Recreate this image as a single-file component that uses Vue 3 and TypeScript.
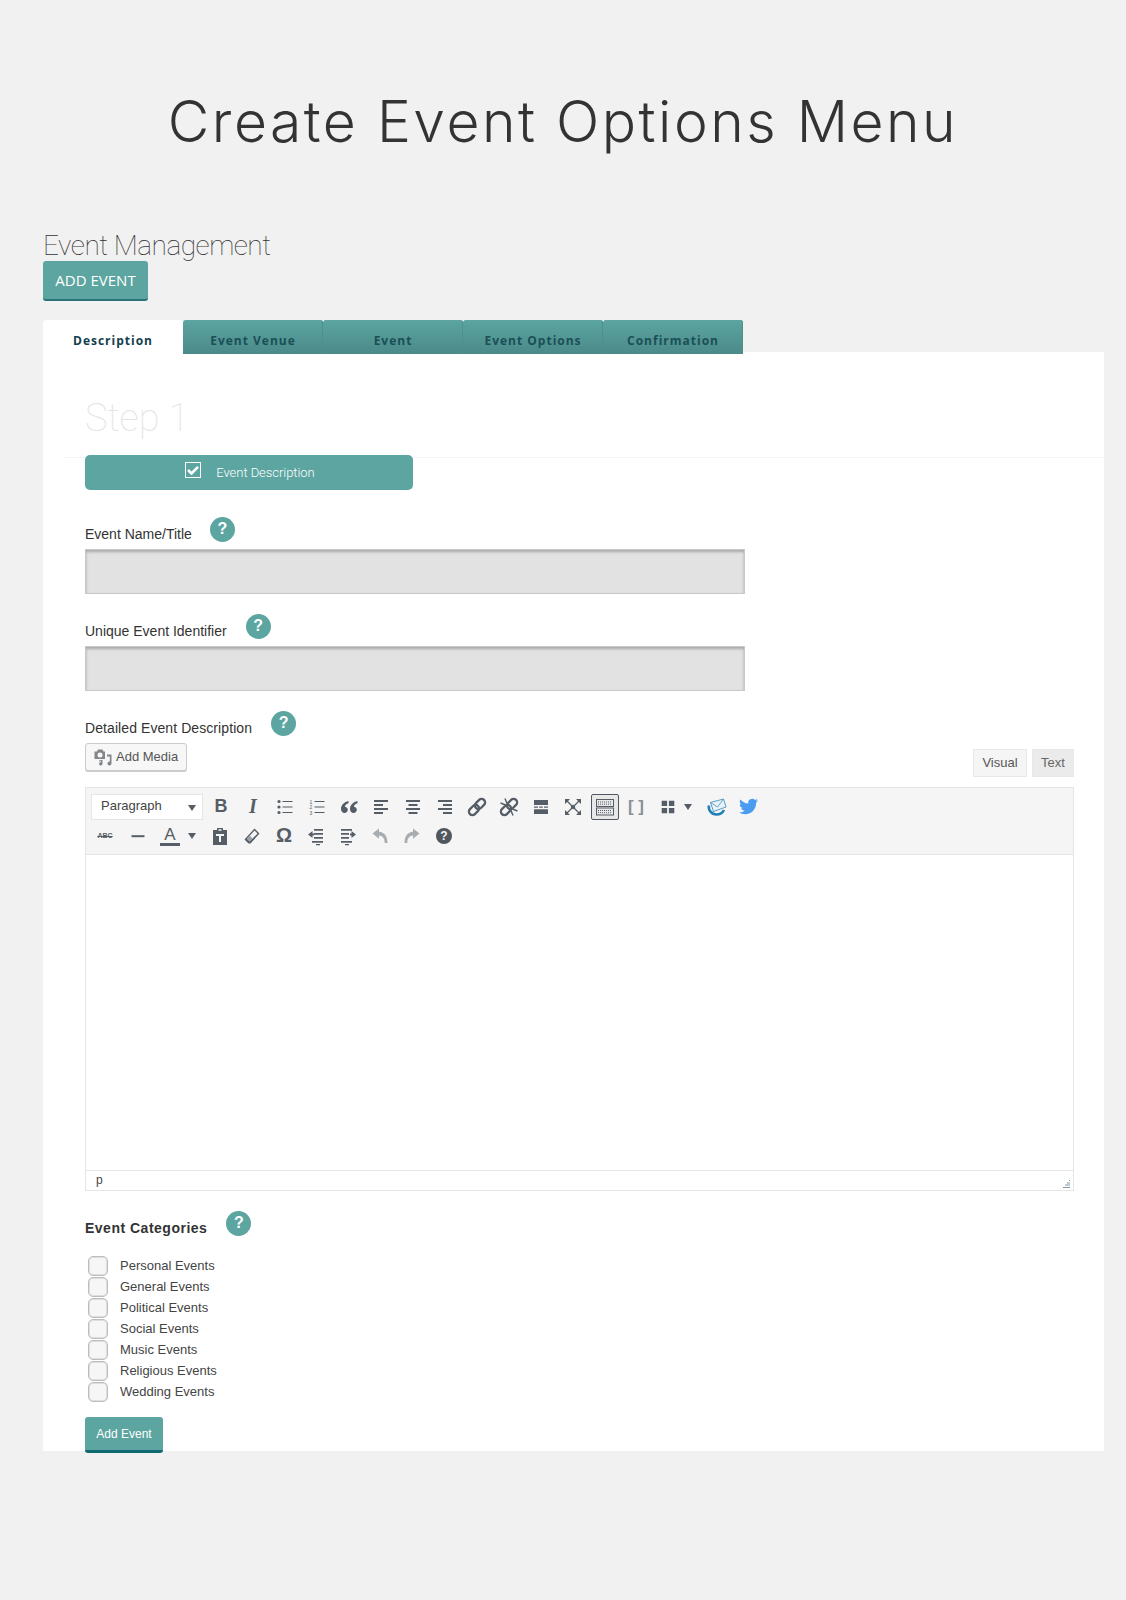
<template>
  <div class="page">
    <h1 class="page-title">Create Event Options Menu</h1>

    <div class="wrap">
      <h2 class="section-title">Event Management</h2>
      <button class="add-top">ADD EVENT</button>

      <div class="tabs">
        <div v-for="(tab, i) in tabs" :key="tab" class="tab" :class="{ active: i === 0 }">{{ tab }}</div>
      </div>

      <div class="panel">
        <h3 class="step">Step 1</h3>

        <div class="step-bar">
          <span class="step-check">
            <svg width="12" height="10" viewBox="0 0 12 10"><path d="M1 5l3.500 3.500L11 1.800" fill="none" stroke="#fff" stroke-width="2.600" /></svg>
          </span>
          <span>Event Description</span>
        </div>

        <div class="label-row first">
          <label>Event Name/Title</label>
          <span class="help">?</span>
        </div>
        <div class="fake-input"></div>

        <div class="label-row">
          <label>Unique Event Identifier</label>
          <span class="help">?</span>
        </div>
        <div class="fake-input"></div>

        <div class="label-row">
          <label class="detailed">Detailed Event Description</label>
          <span class="help">?</span>
        </div>

        <div class="media-row">
          <button class="add-media">
            <svg width="20" height="20" viewBox="0 0 20 20" fill="#82878c">
              <path fill-rule="evenodd" d="M1.500 4.500h2.500l1-2h4.500l1 2h1.500v7.500H1.500zM7 5.500a2.500 2.500 0 100 5 2.500 2.500 0 000-5z" />
              <path d="M14 7.500h4.500v9a2 2 0 11-1.700-2V9.500H14zM6 13.500l3.500-.7v4a1.700 1.700 0 11-1.500-1.700v-1l-2 .4z" />
            </svg>
            <span class="media-label">Add Media</span>
          </button>
          <div class="mode-tabs">
            <span class="mode visual">Visual</span>
            <span class="mode text">Text</span>
          </div>
        </div>

        <div class="editor">
          <div class="toolbar">
            <div class="tb-row">
              <div class="format-select">Paragraph<i class="caret"></i></div>
              <span class="tb glyph bold">B</span>
              <span class="tb glyph italic">I</span>
              <span class="tb">
                <svg viewBox="0 0 20 20"><path d="M7.500 4h10v1h-10zM7.500 9.500h10v1h-10zM7.500 15h10v1h-10z" /><circle cx="4" cy="4.500" r="1.600" /><circle cx="4" cy="10" r="1.600" /><circle cx="4" cy="15.500" r="1.600" /></svg>
              </span>
              <span class="tb">
                <svg viewBox="0 0 20 20"><path d="M7.500 4h10v1h-10zM7.500 9.500h10v1h-10zM7.500 15h10v1h-10z" /><text x="2.500" y="6.500" class="mini">1</text><text x="2.500" y="12" class="mini">2</text><text x="2.500" y="17.500" class="mini">3</text></svg>
              </span>
              <span class="tb">
                <svg viewBox="0 0 20 20"><path d="M9.500 4C5 5 2 8 2 12c0 2.300 1.400 4 3.500 4 1.900 0 3.300-1.400 3.300-3.200 0-1.800-1.300-3.100-3-3.100.4-1.700 1.900-3 3.700-3.400zM18.500 4c-4.500 1-7.500 4-7.500 8 0 2.300 1.400 4 3.500 4 1.900 0 3.300-1.400 3.300-3.200 0-1.800-1.300-3.100-3-3.100.4-1.700 1.900-3 3.700-3.400z" /></svg>
              </span>
              <span class="tb">
                <svg viewBox="0 0 20 20"><path d="M3 3h14v2H3zM3 7h9v2H3zM3 11h14v2H3zM3 15h9v2H3z" /></svg>
              </span>
              <span class="tb">
                <svg viewBox="0 0 20 20"><path d="M3 3h14v2H3zM5.500 7h9v2h-9zM3 11h14v2H3zM5.500 15h9v2h-9z" /></svg>
              </span>
              <span class="tb">
                <svg viewBox="0 0 20 20"><path d="M3 3h14v2H3zM8 7h9v2H8zM3 11h14v2H3zM8 15h9v2H8z" /></svg>
              </span>
              <span class="tb">
                <svg viewBox="0 0 20 20"><g transform="rotate(-45 10 10)" fill="none" stroke="#555d66" stroke-width="2.300"><rect x="0" y="6.500" width="11.500" height="7" rx="3.500" /><rect x="8.500" y="6.500" width="11.500" height="7" rx="3.500" /></g></svg>
              </span>
              <span class="tb">
                <svg viewBox="0 0 20 20">
                  <g transform="rotate(-45 10 10)" fill="none" stroke="#555d66" stroke-width="2.300"><rect x="0" y="6.500" width="11.500" height="7" rx="3.500" /><rect x="8.500" y="6.500" width="11.500" height="7" rx="3.500" /></g>
                  <path d="M1.500 6l5 2M6 1.500l2 5M18.500 14l-5-2M14 18.500l-2-5" stroke="#555d66" stroke-width="1.400" />
                </svg>
              </span>
              <span class="tb">
                <svg viewBox="0 0 20 20"><path d="M3 3h14v5H3zM3 9.500h4v1.200H3zM8.200 9.500h3.600v1.200H8.200zM13 9.500h4v1.200h-4zM3 12.200h14V17H3z" /></svg>
              </span>
              <span class="tb">
                <svg viewBox="0 0 20 20">
                  <path d="M3 3l14 14M17 3L3 17" stroke="#555d66" stroke-width="1.300" />
                  <path d="M2 2h5L2 7zM18 2h-5l5 5zM2 18h5l-5-5zM18 18h-5l5-5zM10 7.500l2.500 2.500-2.500 2.500L7.500 10z" />
                </svg>
              </span>
              <span class="tb sink">
                <svg viewBox="0 0 20 20" fill="none" stroke="#555d66">
                  <rect x="1.500" y="2.500" width="17" height="7" />
                  <rect x="1.500" y="11" width="17" height="7" />
                  <path d="M3 5h14M3 7.200h14M3 13.500h14M3 15.700h14" stroke-dasharray="1 1" />
                </svg>
              </span>
              <span class="tb glyph shortcode">[ ]</span>
              <span class="tb grid">
                <svg viewBox="0 0 20 20"><path d="M3 3h6v6H3zM11 3h6v6h-6zM3 11h6v6H3zM11 11h6v6h-6z" /></svg>
                <i class="caret"></i>
              </span>
              <span class="tb plugin">
                <svg viewBox="0 0 20 20">
                  <path d="M2 8.500c-1 4.500 2.500 9 7.500 9 3 0 6-1.500 7.500-4.500" fill="none" stroke="#1f7fb8" stroke-width="2.600" />
                  <path d="M3.500 5.500L16.500 2l2.500 8-12.500 4.500z" fill="#e8f2f8" stroke="#4b93c2" stroke-width="0.900" />
                  <path d="M3.500 5.500l7 4.500 6-8" fill="none" stroke="#4b93c2" stroke-width="0.800" />
                </svg>
              </span>
              <span class="tb twitter">
                <svg viewBox="0 0 24 24"><path d="M23.953 4.570a10 10 0 01-2.825.775 4.958 4.958 0 002.163-2.723c-.951.555-2.005.959-3.127 1.184a4.920 4.920 0 00-8.384 4.482C7.690 8.095 4.067 6.130 1.640 3.162a4.822 4.822 0 00-.666 2.475c0 1.710.870 3.213 2.188 4.096a4.904 4.904 0 01-2.228-.616v.060a4.923 4.923 0 003.946 4.827 4.996 4.996 0 01-2.212.085 4.936 4.936 0 004.604 3.417 9.867 9.867 0 01-6.102 2.105c-.390 0-.779-.023-1.170-.067a13.995 13.995 0 007.557 2.209c9.053 0 13.998-7.496 13.998-13.985 0-.210 0-.420-.015-.630A9.935 9.935 0 0024 4.590z" /></svg>
              </span>
            </div>

            <div class="tb-row second">
              <span class="tb glyph abc">ABC</span>
              <span class="tb">
                <svg viewBox="0 0 20 20"><path d="M3.500 9.200h13v2h-13z" /></svg>
              </span>
              <span class="tb color"><b>A</b><i class="color-bar"></i></span>
              <i class="caret row-caret"></i>
              <span class="tb">
                <svg viewBox="0 0 20 20"><path d="M7 2h6v2h4v15H3V4h4zM8.500 3.300v1.500h3V3.300zM6 8v2h3v6h2v-6h3V8z" fill-rule="evenodd" /></svg>
              </span>
              <span class="tb">
                <svg viewBox="0 0 20 20"><path fill-rule="evenodd" d="M12.500 2.500l5 5-9 10h-2l-4-4zM12.500 4.600L5 12.800l2.600 2.800 7.900-8z" /><path d="M5 12.800l2.600 2.800 3-3.200-2.700-2.700z" fill="#9aa0a5" /></svg>
              </span>
              <span class="tb glyph omega">Ω</span>
              <span class="tb">
                <svg viewBox="0 0 20 20"><path d="M8 3h9v1.800H8zM8 7h9v1.800H8zM8 11h9v1.800H8zM6 15h11v1.800H6zM10 18h4v1.200h-4zM2 8.500L6.500 5v2.500h1.500v2H6.500V12z" /></svg>
              </span>
              <span class="tb">
                <svg viewBox="0 0 20 20"><path d="M3 3h11v1.800H3zM3 7h8v1.800H3zM3 11h8v1.800H3zM3 15h11v1.800H3zM7 18h4v1.200H7zM18 8.500L13.500 5v2.500H12v2h1.500V12z" /></svg>
              </span>
              <span class="tb muted">
                <svg viewBox="0 0 20 20"><path d="M2.500 7.500L9 2.500v3.300c5 .5 8.500 4 8.500 11.200h-2.800c0-4.800-2-7-5.700-7.500v3.300z" /></svg>
              </span>
              <span class="tb muted">
                <svg viewBox="0 0 20 20"><path d="M17.500 7.500L11 2.500v3.300c-5 .5-8.500 4-8.500 11.200h2.800c0-4.800 2-7 5.700-7.500v3.300z" /></svg>
              </span>
              <span class="tb help-dark"><b>?</b></span>
            </div>
          </div>
          <div class="edit-area"></div>
          <div class="status-bar">
            <span>p</span>
            <svg class="resize" width="10" height="10" viewBox="0 0 10 10"><path d="M8 1h1v1H8zM6 3.500h3v1H6zM4 5.500h5v1H4zM2 8h7v1H2z" fill="#7d97aa" /></svg>
          </div>
        </div>

        <div class="label-row cat-row">
          <label class="strong">Event Categories</label>
          <span class="help">?</span>
        </div>

        <ul class="cats">
          <li v-for="cat in categories" :key="cat"><span class="box"></span>{{ cat }}</li>
        </ul>

        <button class="add-bottom">Add Event</button>
      </div>
    </div>
  </div>
</template>

<script setup lang="ts">
const tabs: string[] = ['Description', 'Event Venue', 'Event', 'Event Options', 'Confirmation']

const categories: string[] = [
  'Personal Events',
  'General Events',
  'Political Events',
  'Social Events',
  'Music Events',
  'Religious Events',
  'Wedding Events',
]
</script>

<style>
html,
body {
  background: #f1f1f1;
}
</style>

<style scoped>
.page {
  height: 1600px;
  background: #f1f1f1;
  font-family: "Liberation Sans", Arial, sans-serif;
  color: #333;
  overflow: hidden;
}

.page-title {
  margin: 0;
  padding-top: 85px;
  height: 149px;
  box-sizing: content-box;
  text-align: center;
  font-family: Inter, sans-serif;
  font-weight: 300;
  font-size: 57px;
  line-height: 74px;
  letter-spacing: 2.5px;
  color: #333;
}

.wrap {
  padding: 0 22px 0 43px;
}

.section-title {
  margin: -2px 0 2px;
  font-family: Roboto, sans-serif;
  font-weight: 100;
  font-size: 28px;
  line-height: 27px;
  letter-spacing: -0.5px;
  color: #333;
}

.add-top {
  display: block;
  width: 105px;
  height: 40px;
  padding: 0;
  border: 0;
  border-bottom: 2px solid #2b7378;
  border-radius: 3px;
  background: #5ca5a1;
  color: #fff;
  font-family: "Open Sans", sans-serif;
  font-size: 15px;
}

.tabs {
  display: flex;
  height: 34px;
  margin-top: 19px;
  margin-bottom: -2px;
  position: relative;
  z-index: 1;
}

.tab {
  width: 140px;
  height: 34px;
  line-height: 42px;
  text-align: center;
  font-family: "Open Sans", sans-serif;
  font-weight: 700;
  font-size: 12px;
  letter-spacing: 1px;
  color: #1b4f57;
  background: linear-gradient(#5ca5a1, #4b8a88);
  border-radius: 3px 3px 0 0;
  box-shadow: inset -1px 0 0 #4f8f8c;
}

.tab.active {
  background: #fff;
  color: #12404c;
  box-shadow: none;
  height: 36px;
}

.panel {
  height: 1099px;
  padding: 0 30px 0 42px;
  background: #fff;
}

.step {
  margin: 0 -30px 0 -21px;
  padding: 43px 0 0 21px;
  height: 62px;
  box-sizing: content-box;
  border-bottom: 1px solid #f3f3f3;
  font-family: Roboto, sans-serif;
  font-weight: 100;
  font-size: 38px;
  line-height: 46px;
  color: #e4e4e4;
}

.step-bar {
  position: relative;
  display: flex;
  align-items: center;
  justify-content: center;
  gap: 15px;
  width: 328px;
  height: 35px;
  margin-top: -3px;
  padding-left: 2px;
  box-sizing: border-box;
  border-radius: 5px;
  background: #5ca5a1;
  color: #fff;
  font-family: Roboto, sans-serif;
  font-weight: 300;
  font-size: 13px;
  letter-spacing: -0.05px;
}

.step-check {
  display: flex;
  align-items: center;
  justify-content: center;
  width: 16px;
  height: 16px;
  margin-top: -6px;
  box-sizing: border-box;
  border: 1px solid #fff;
}

.label-row {
  display: flex;
  align-items: flex-end;
  gap: 19px;
  height: 25px;
  margin-top: 20px;
}

.label-row.first {
  margin-top: 27px;
  gap: 18px;
}

.label-row label {
  font-size: 14px;
  line-height: 16px;
  color: #333;
}

.label-row .detailed {
  letter-spacing: 0.08px;
}

.label-row .strong {
  font-weight: 700;
  letter-spacing: 0.5px;
}

.help {
  width: 25px;
  height: 25px;
  border-radius: 50%;
  background: #5ca5a1;
  color: #fff;
  font-weight: 700;
  font-size: 16px;
  line-height: 23px;
  text-align: center;
}

.fake-input {
  height: 45px;
  margin-top: 7px;
  width: 660px;
  box-sizing: border-box;
  border: 1px solid #c8c8c8;
  background: #e2e2e2;
  box-shadow: inset 0 2px 3px #a8a8a8;
}

.media-row {
  display: flex;
  justify-content: space-between;
  margin-top: 7px;
}

.add-media {
  display: flex;
  align-items: center;
  gap: 3px;
  width: 102px;
  height: 28px;
  padding: 0 0 0 7px;
  border: 1px solid #ccc;
  border-radius: 3px;
  background: #f7f7f7;
  box-shadow: 0 1px 0 #ccc;
  color: #555;
  font-family: "Liberation Sans", sans-serif;
  font-size: 13px;
}

.media-label {
  margin-top: -2px;
}

.mode-tabs {
  display: flex;
  gap: 5px;
  margin-top: 6px;
}

.mode {
  height: 28px;
  line-height: 26px;
  box-sizing: border-box;
  border: 1px solid #e8e8e8;
  text-align: center;
  font-size: 13px;
  color: #555;
}

.mode.visual {
  width: 54px;
  background: #f5f5f5;
}

.mode.text {
  width: 42px;
  background: #ebebeb;
  color: #666;
}

.editor {
  margin-top: 10px;
  border: 1px solid #e5e5e5;
}

.toolbar {
  height: 67px;
  box-sizing: border-box;
  padding: 5px 0 0 5px;
  background: #f5f5f5;
  border-bottom: 1px solid #e5e5e5;
}

.tb-row {
  display: flex;
  align-items: center;
  height: 27px;
}

.tb-row.second {
  margin-top: 2px;
  margin-left: -1px;
}

.format-select {
  position: relative;
  width: 112px;
  height: 26px;
  margin-right: 2px;
  padding-left: 9px;
  box-sizing: border-box;
  border: 1px solid #e5e5e5;
  background: #fff;
  font-size: 13px;
  line-height: 22px;
  color: #444;
}

.format-select .caret {
  position: absolute;
  right: 6px;
  top: 10px;
}

.caret {
  display: block;
  width: 0;
  height: 0;
  border-left: 4px solid transparent;
  border-right: 4px solid transparent;
  border-top: 6px solid #555d66;
}

.tb {
  display: flex;
  align-items: center;
  justify-content: center;
  flex: none;
  width: 32px;
  height: 26px;
  box-sizing: border-box;
  color: #555d66;
}

.tb svg {
  width: 20px;
  height: 20px;
  fill: #555d66;
}

.mini {
  font-family: "Liberation Sans", sans-serif;
  font-size: 5px;
  fill: #555d66;
}

.glyph {
  font-family: "Liberation Sans", sans-serif;
}

.bold {
  font-weight: 700;
  font-size: 18px;
}

.italic {
  font-family: "Liberation Serif", serif;
  font-style: italic;
  font-weight: 700;
  font-size: 20px;
}

.sink {
  width: 28px;
  margin: 0 2px;
  border: 1px solid #50575e;
  border-radius: 2px;
  background: #e8e8e8;
}

.sink svg {
  fill: none;
}

.shortcode {
  font-weight: 700;
  font-size: 17px;
  letter-spacing: 0;
  color: #8a8f94;
  margin-left: -1px;
  margin-right: 1px;
}

.grid {
  width: 48px;
  justify-content: flex-start;
  gap: 7px;
  padding-left: 6px;
}

.grid svg {
  width: 18px;
  height: 18px;
}

.plugin {
  width: 31px;
}

.plugin svg,
.twitter svg {
  fill: #4b9bf0;
}

.twitter svg {
  width: 19px;
  height: 19px;
}

.abc {
  width: 30px;
  margin-right: 2px;
  font-weight: 700;
  font-size: 7px;
  text-decoration: line-through;
}

.color {
  position: relative;
  width: 32px;
  font-size: 17px;
}

.color b {
  font-weight: 400;
  margin-top: -2px;
}

.color-bar {
  position: absolute;
  left: 6px;
  bottom: 3px;
  width: 20px;
  height: 3px;
  background: #555d66;
}

.row-caret {
  margin: 0 8px 0 2px;
  width: 0;
  flex: none;
}

.omega {
  font-weight: 700;
  font-size: 20px;
}

.muted svg {
  fill: #a8adb2;
}

.help-dark b {
  display: block;
  width: 16px;
  height: 16px;
  border-radius: 50%;
  background: #50575e;
  color: #f5f5f5;
  font-size: 12px;
  line-height: 16px;
  text-align: center;
}

.edit-area {
  height: 315px;
  background: #fff;
}

.status-bar {
  position: relative;
  height: 20px;
  box-sizing: border-box;
  padding-left: 10px;
  border-top: 1px solid #e5e5e5;
  font-size: 12px;
  line-height: 18px;
  color: #444;
}

.resize {
  position: absolute;
  right: 2px;
  bottom: 1px;
}

.cat-row {
  margin-top: 20px;
}

.cats {
  margin: 19px 0 0;
  padding: 0;
  list-style: none;
}

.cats li {
  display: flex;
  align-items: center;
  gap: 12px;
  height: 21px;
  padding-left: 3px;
  font-size: 13px;
  color: #444;
}

.box {
  width: 20px;
  height: 20px;
  box-sizing: border-box;
  border: 1px solid #bdbdbd;
  border-radius: 5px;
  background: #f6f6f6;
  box-shadow: inset 0 0 0 1px #dedede;
}

.add-bottom {
  display: block;
  width: 78px;
  height: 36px;
  margin-top: 15px;
  padding: 0;
  border: 0;
  border-bottom: 3px solid #0f6a72;
  border-radius: 3px;
  background: #5ca5a1;
  color: #fff;
  font-family: "Liberation Sans", sans-serif;
  font-size: 12px;
}
</style>
